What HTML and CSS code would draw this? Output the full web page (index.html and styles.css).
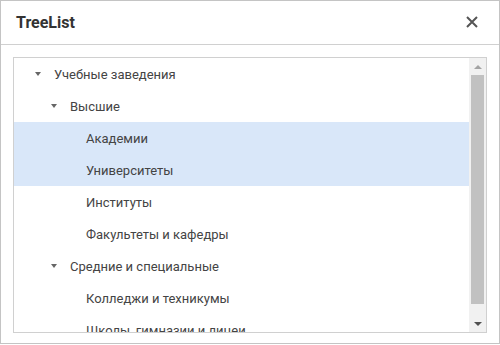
FILE: index.html
```html
<!DOCTYPE html>
<html lang="ru">
<head>
  <meta charset="UTF-8">
  <meta name="viewport" content="width=device-width, initial-scale=1.0">
  <link rel="stylesheet" href="styles.css">
</head>
<body>

<div class="window">
  <div class="window-header">
    <div class="window-title">TreeList</div>
    <button class="close-btn" aria-label="Закрыть">
      <svg width="12" height="12" viewBox="0 0 12 12">
        <path d="M1 1 L11 11 M11 1 L1 11" stroke="#555" stroke-width="2" fill="none"/>
      </svg>
    </button>
  </div>

  <div class="window-body">
    <div class="tree">
      <div class="tree-list">
        <div class="tree-row level-0"><span class="toggle"></span>Учебные заведения</div>
        <div class="tree-row level-1"><span class="toggle"></span>Высшие</div>
        <div class="tree-row level-2 selected"><span class="leaf"></span>Академии</div>
        <div class="tree-row level-2 selected"><span class="leaf"></span>Университеты</div>
        <div class="tree-row level-2"><span class="leaf"></span>Институты</div>
        <div class="tree-row level-2"><span class="leaf"></span>Факультеты и кафедры</div>
        <div class="tree-row level-1"><span class="toggle"></span>Средние и специальные</div>
        <div class="tree-row level-2"><span class="leaf"></span>Колледжи и техникумы</div>
        <div class="tree-row level-2"><span class="leaf"></span>Школы, гимназии и лицеи</div>
      </div>
      <div class="scrollbar">
        <div class="scroll-btn"><span class="arrow-up"></span></div>
        <div class="scroll-track"><div class="scroll-thumb"></div></div>
        <div class="scroll-btn"><span class="arrow-down"></span></div>
      </div>
    </div>
  </div>
</div>

</body>
</html>
```

FILE: styles.css
```css
body {
  margin: 0;
  font-family: Roboto, "Noto Sans", Arial, sans-serif;
  background-color: #fff;
}

.window {
  width: 500px;
  height: 344px;
  box-sizing: border-box;
  border: 1px solid #c4c4c4;
  background-color: #fff;
  display: flex;
  flex-direction: column;
}

.window-header {
  height: 44px;
  flex-shrink: 0;
  box-sizing: border-box;
  border-bottom: 1px solid #d0d0d0;
  display: flex;
  align-items: center;
  justify-content: space-between;
  padding: 0 21px 1px 15px;
}

.window-title {
  font-size: 16px;
  font-weight: 700;
  color: #333;
}

.close-btn {
  background: none;
  border: none;
  padding: 0;
  width: 12px;
  height: 12px;
  cursor: pointer;
  display: flex;
}

.window-body {
  flex: 1;
  min-height: 0;
  padding: 12px 12px 10px 12px;
  display: flex;
}

.tree {
  flex: 1;
  min-height: 0;
  border: 1px solid #d0d0d0;
  display: flex;
  overflow: hidden;
}

.tree-list {
  flex: 1;
  overflow: hidden;
}

.tree-row {
  height: 32px;
  display: flex;
  align-items: center;
  font-size: 13px;
  color: #444;
  white-space: nowrap;
}

.tree-row.selected {
  background-color: #d9e7f9;
}

.level-0 { padding-left: 16px; }
.level-1 { padding-left: 32px; }
.level-2 { padding-left: 48px; }

.toggle,
.leaf {
  width: 16px;
  margin-right: 8px;
  display: flex;
  justify-content: center;
}

.toggle::before {
  content: "";
  border-left: 3px solid transparent;
  border-right: 3px solid transparent;
  border-top: 4px solid #666;
}

.scrollbar {
  width: 17px;
  background-color: #f1f1f1;
  display: flex;
  flex-direction: column;
}

.scroll-btn {
  height: 17px;
  display: flex;
  align-items: center;
  justify-content: center;
}

.arrow-up {
  border-left: 4px solid transparent;
  border-right: 4px solid transparent;
  border-bottom: 4px solid #a3a3a3;
}

.arrow-down {
  border-left: 4px solid transparent;
  border-right: 4px solid transparent;
  border-top: 4px solid #505050;
}

.scroll-track {
  flex: 1;
  padding: 0 2px;
  display: flex;
}

.scroll-thumb {
  flex: 1;
  margin-bottom: 11px;
  background-color: #c1c1c1;
}
```
